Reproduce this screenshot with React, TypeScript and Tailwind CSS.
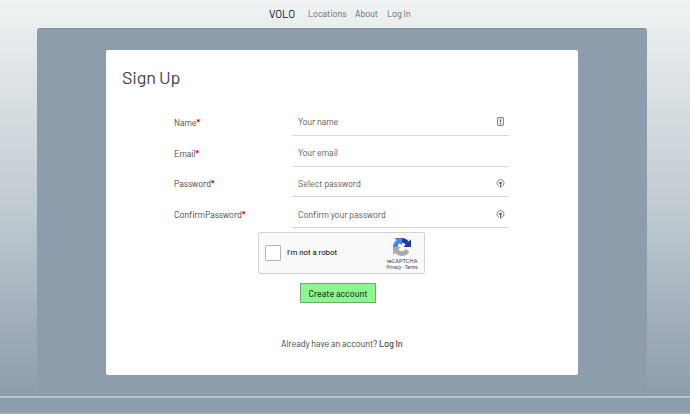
import React from "react";

type FieldProps = {
  label: string;
  placeholder: string;
  icon?: React.ReactNode;
};

function ContactIcon() {
  return (
    <svg width="7" height="9" viewBox="0 0 7 9" fill="none" stroke="#858585" className="mr-[5px]">
      <rect x="0.6" y="0.6" width="5.8" height="7.8" rx="0.8" strokeWidth="1.1" />
      <path d="M3.5 2.2v3M3.5 5.9v1" stroke="#555" strokeWidth="1.2" />
    </svg>
  );
}

function KeyIcon() {
  return (
    <svg width="9" height="9" viewBox="0 0 9 9" fill="none" stroke="#858585" className="mr-1">
      <path d="M3 7.3A3.5 3.5 0 1 1 6 7.3" strokeWidth="1" />
      <circle cx="4.5" cy="4" r="1.3" fill="#555" stroke="none" />
      <path d="M4.5 4v4.8M4.5 6.9h1.2" stroke="#666" strokeWidth="1" />
    </svg>
  );
}

function RecaptchaLogo() {
  return (
    <svg width="18" height="18" viewBox="0 0 64 64">
      <path fill="#1c3aa9" d="M64 32V4l-8 8C50 5 42 0 32 0v17c6 0 10 3 13 7l-8 8z" />
      <path fill="#4285f4" d="M32 0H5l8 8C5 14 0 22 0 32h17c0-6 3-11 7-13l8 8z" />
      <path fill="#ababab" d="M0 32v28l8-8c6 8 14 12 24 12 11 0 20-5 26-13L45 38c-3 5-7 9-13 9-6 0-10-3-12-7l8-8z" />
    </svg>
  );
}

function Field({ label, placeholder, icon }: FieldProps) {
  return (
    <div className="flex h-[30.8px] items-end tracking-[-0.07px]">
      <div className="flex h-[27px] w-[118px] items-center text-[#444]">
        <span>{label}</span>
        <span className="text-[9px] font-bold text-[#f00]">*</span>
      </div>
      <div className="flex h-[27px] w-[217px] items-center justify-between border-b border-[#d9d9d9] pl-[6px] text-[#555]">
        <span>{placeholder}</span>
        {icon}
      </div>
    </div>
  );
}

export default function App() {
  return (
    <div className="flex h-[414px] w-[690px] flex-col bg-linear-to-b from-[#eff3f3] via-[#c0cad1] via-50% to-[#8e9dab] to-96% font-['Barlow','Roboto',sans-serif] text-[9px] leading-none whitespace-nowrap">
      <nav className="flex h-[27px] items-center pl-[269px] tracking-[-0.05px] text-[#666]">
        <span className="w-[39px] text-[11px] text-[#111]">VOLO</span>
        <span className="w-[47px]">Locations</span>
        <span className="w-8">About</span>
        <span>Log In</span>
      </nav>

      <main className="mt-px ml-[36.5px] h-[368px] w-[610.5px] rounded-t-[3px] border-t border-[#83929f] bg-[#8e9dab] pt-[21px] pl-[69.5px]">
        <section className="h-[325px] w-[472px] rounded-[2px] bg-white pt-[18px]">
          <h1 className="ml-4 h-[38px] text-[18px] leading-[18px] tracking-[-0.2px] text-[#444]">Sign Up</h1>
          <form className="-mt-px ml-[68px] w-[335px]">
            <Field label="Name" placeholder="Your name" icon={<ContactIcon />} />
            <Field label="Email" placeholder="Your email" />
            <Field label="Password" placeholder="Select password" icon={<KeyIcon />} />
            <Field label="ConfirmPassword" placeholder="Confirm your password" icon={<KeyIcon />} />
          </form>

          <div className="mt-[4px] ml-[152px] flex h-[42px] w-[167px] items-center rounded-[2px] border border-[#d3d3d3] bg-[#f9f9f9]">
            <span className="ml-[6px] size-4 rounded-[1px] border border-[#b5b5b5] bg-white" />
            <span className="ml-[6px] w-[99px] font-['Roboto',sans-serif] text-[7.8px] text-black">I'm not a robot</span>
            <div className="flex w-[32px] flex-col items-center pt-[2px] font-['Roboto',sans-serif]">
              <RecaptchaLogo />
              <span className="mt-[2px] text-[5.7px] leading-[7px] text-[#444]">reCAPTCHA</span>
              <span className="text-[4.6px] leading-[6px] text-[#444]">Privacy - Terms</span>
            </div>
          </div>

          <button className="mt-[9px] ml-[194px] flex h-[20px] w-[76px] items-center justify-center border border-[#72a578] bg-[#8bf78e] pt-px text-[9px] font-medium tracking-[-0.08px] text-[#264a2f]">
            Create account
          </button>

          <p className="mt-[36px] ml-[175px] tracking-[-0.08px] text-[#444]">
            Already have an account? <span className="font-medium">Log In</span>
          </p>
        </section>
      </main>

      <footer className="h-[18px] border-t-2 border-b border-t-[#b7c2cb] border-b-[#a5b1bb] bg-[#8e9dab]" />
    </div>
  );
}
